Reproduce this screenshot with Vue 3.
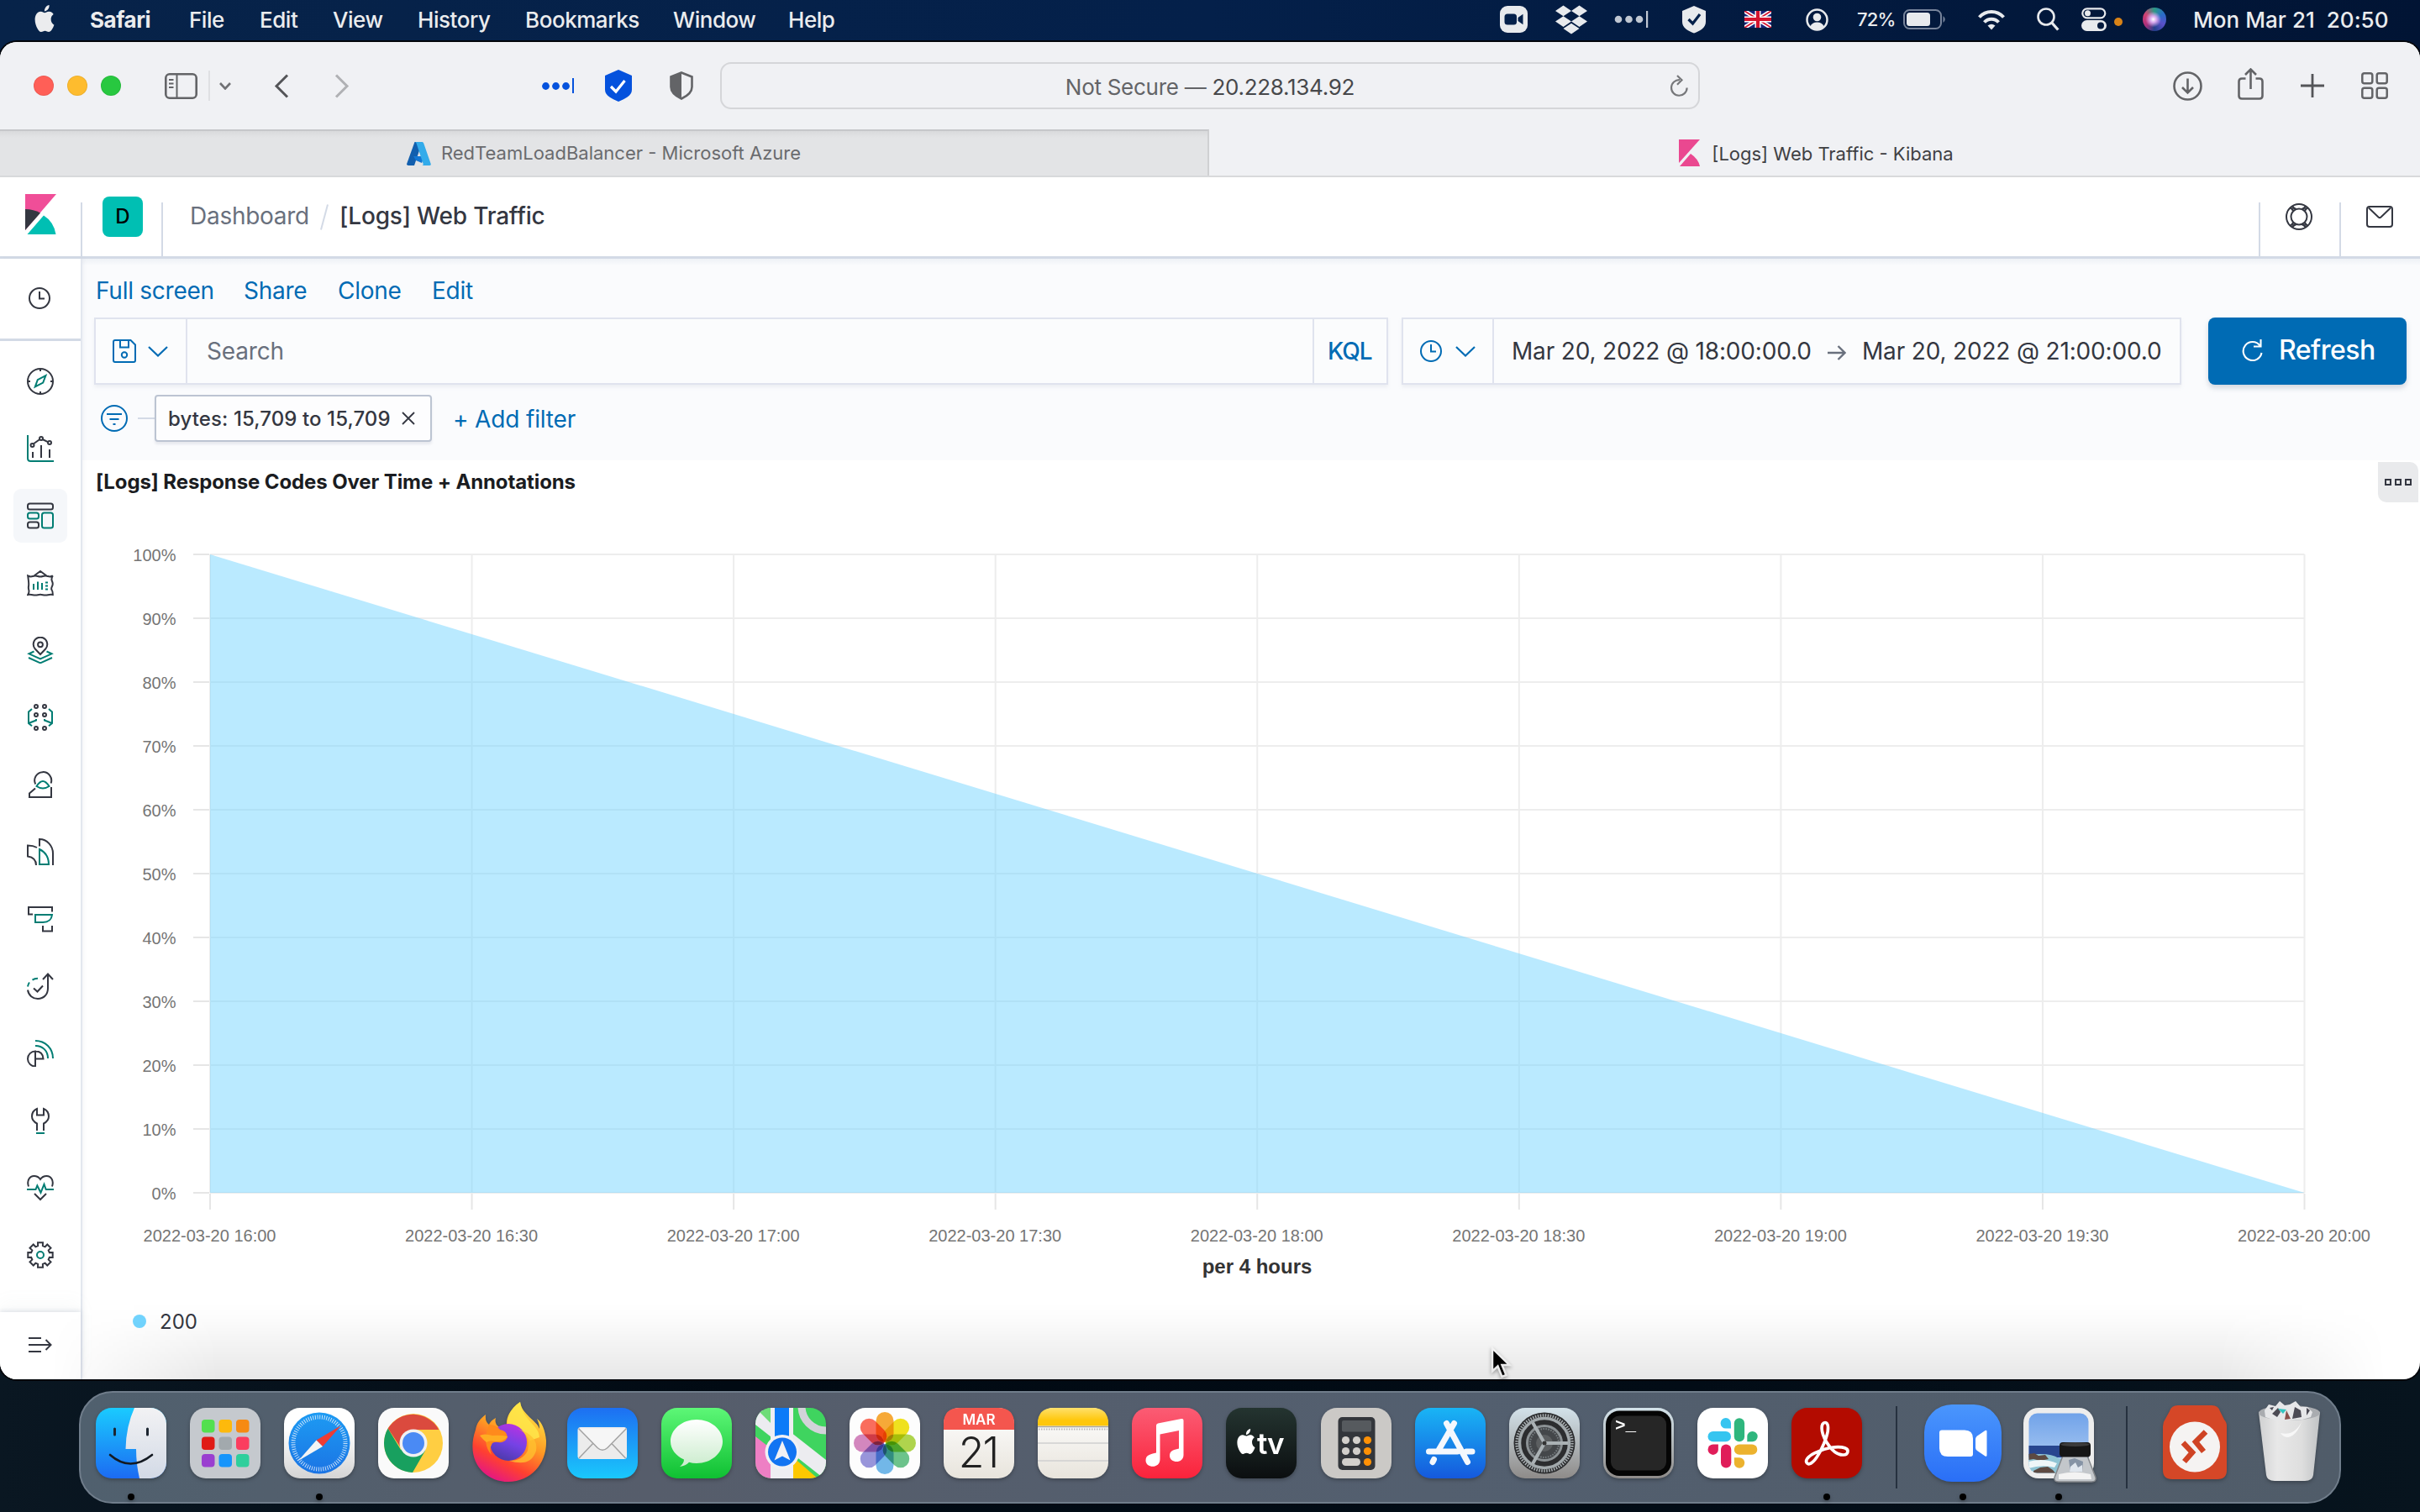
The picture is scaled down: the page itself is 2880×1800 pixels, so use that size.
<script setup>
const INK = '#343741'
const TEAL = '#017d73'

const menus = [
  { label: 'Safari', w: 118, bold: true },
  { label: 'File', w: 84 },
  { label: 'Edit', w: 87 },
  { label: 'View', w: 101 },
  { label: 'History', w: 128 },
  { label: 'Bookmarks', w: 176 },
  { label: 'Window', w: 137 },
  { label: 'Help', w: 80 },
]

// Toothed outline for the settings icon
const gearPath = (() => {
  const pts = []
  for (let i = 0; i < 8; i++) {
    const a = (i * Math.PI) / 4
    for (const [da, r] of [[-0.26, 11.2], [-0.2, 15], [0.2, 15], [0.26, 11.2]]) {
      pts.push(`${(16 + r * Math.sin(a + da)).toFixed(2)} ${(16 - r * Math.cos(a + da)).toFixed(2)}`)
    }
  }
  return 'M' + pts.join('L') + 'z'
})()

const k = (d) => `<path d="${d}" stroke="${INK}"/>`
const t = (d) => `<path d="${d}" stroke="${TEAL}"/>`
const kc = (x, y, r) => `<circle cx="${x}" cy="${y}" r="${r}" stroke="${INK}"/>`

const nav = [
  { id: 'discover', svg: kc(16, 16, 15) + k('M16 1v3M16 28v3M1 16h3M28 16h3') + t('M9.8 22.4l3-8.2 9.6-5-3.200 8.400z') },
  { id: 'visualize', svg: t('M1 0v27.500q0 3.500 3.500 3.500H32') + k('M7 20v7M17 12v7.500V27M27 17v10M8 10.300l7-5.100M18.600 5l6.300 3.200') + kc(6.500, 12, 2) + kc(17, 4, 2) + kc(27, 9, 2) },
  { id: 'dashboard', active: true, svg: `<rect x="1" y="1.500" width="30" height="7" rx="2.500" stroke="${INK}"/><rect x="1" y="12.500" width="13" height="7" rx="2.500" stroke="${TEAL}"/><rect x="1" y="23.500" width="13" height="7" rx="2.500" stroke="${INK}"/><rect x="18" y="12.500" width="13" height="18" rx="2.500" stroke="${TEAL}"/>` },
  { id: 'canvas', svg: k('M8.500 7.500L16 2l7.500 5.500M1.200 7.500Q4 9 7 8t6 0 6 0 6 0 5.800-.5Q28.500 11 30 14t0 6-.3 4.500 1.100 5.500Q28 29.500 25 30.200t-6 0-6 0-6 0-5.800-.2Q3 27 2.300 24.500T2 20t0-6-.8-6.500z') + t('M8 17v7M13 14.500V24M18 16v8M22 15.500h3M22 19.500h3M22 23.500h3') },
  { id: 'maps', svg: k('M16 21L9.800 14.500a8.300 8.300 0 1 1 12.400 0z') + kc(16, 9.300, 2.900) + t('M8.500 17.500L2.500 20.300 16 26.500l13.500-6.200-6-2.800M2 25l14 6.300L30 25') },
  { id: 'ml', svg: [[11, 3], [21, 3], [11, 13], [21, 13], [11, 29], [21, 29]].map(([x, y]) => kc(x, y, 2)).join('') + t('M6 6L2 9.500V23l4 3.300M2 23l9-3.500V18M26 6l4 3.500V23l-4 3.300M30 23l-9-3.500V18') },
  { id: 'user', svg: k('M10.200 15.500A10 10 0 1 1 28.600 14.500M10 20.500L3 26.500V31h26V19') + t('M11.500 18q4-6 7.500-6t7.500 6q-7.500 5-15 0z') },
  { id: 'metrics', svg: k('M15 9.500V1c9 0 16 8 16 17v14M12 11Q7.500 8.500 1 8.500V21.500Q11 23 11 32') + t('M15 13q11 5.500 11 18H15z') },
  { id: 'apm', svg: k('M7 10.500H2V2h28v5.500M19 24v6.500h11V24') + t('M10 11h20q-1 9-11 9h-9z') },
  { id: 'uptime', svg: k('M19 8l6-6.500L31 8M25 2v16.500C25 26 20 31 13 31 7 31 2 27 1 20.500M8 18.500l4.500 4 6.500-7') + t('M1 16.500q.5-3 2-5M6.500 8.600Q9 7 13 6.800') },
  { id: 'siem', svg: t('M10 1c12 0 21 9 21 21M10 7c9 0 15 6 15 15') + k('M10 13.500a9 9 0 0 0 0 18zM10 13.500q9 0 9.500 9H10') },
  { id: 'devtools', svg: k('M12 28v-8.500C8 17.500 6 15 6 11c0-4 2.500-7.500 6-9v7.500h8V2c3.500 1.500 6 5 6 9 0 4-2 6.500-6 8.500V28') + t('M11 31h10') },
  { id: 'monitoring', svg: k('M2 14.500C-.5 7 3.500 2 8.500 2 12 2 14.500 3.700 16 6c1.500-2.300 4-4 7.500-4 5 0 9 5 6.500 12.500M9 23l7 7 7-7') + t('M0 18h10.500l1.800-4.500 4.200 8.300 4-10 2.200 6.200H32') },
  { id: 'management', svg: k(gearPath) + `<circle cx="16" cy="16" r="4" stroke="${TEAL}"/>` },
]

const chart = { left: 250, right: 2742.5, top: 660, bottom: 1420 }
const yTicks = Array.from({ length: 11 }, (_, i) => ({
  label: `${100 - i * 10}%`,
  y: chart.top + ((chart.bottom - chart.top) * i) / 10,
}))
const xTicks = ['16:00', '16:30', '17:00', '17:30', '18:00', '18:30', '19:00', '19:30', '20:00'].map((v, i) => ({
  label: `2022-03-20 ${v}`,
  x: chart.left + ((chart.right - chart.left) * i) / 8,
}))

const launchpad = ['#53e04f', '#fdb90c', '#f68a12', '#e01b16', '#a2a9ad', '#fb3d5f', '#9a3fd0', '#1795fb', '#2fcf9c']
const petals = ['#f8a01c', '#f0e000', '#a6d134', '#59bd7c', '#5fb0e8', '#8b87d8', '#cf78b8', '#fb5a48']
const APPLE = 'M12.152 6.896c-.948 0-2.415-1.078-3.960-1.040-2.040.027-3.910 1.183-4.961 3.014-2.117 3.675-.546 9.103 1.519 12.090 1.013 1.454 2.208 3.090 3.792 3.039 1.520-.065 2.090-.987 3.935-.987 1.831 0 2.350.987 3.960.948 1.637-.026 2.676-1.480 3.676-2.948 1.156-1.688 1.636-3.325 1.662-3.415-.039-.013-3.182-1.221-3.220-4.857-.026-3.040 2.480-4.494 2.597-4.559-1.429-2.090-3.623-2.324-4.390-2.376-2-.156-3.675 1.090-4.610 1.090zM15.530 3.830c.843-1.012 1.400-2.427 1.245-3.830-1.207.052-2.662.805-3.532 1.818-.780.896-1.454 2.338-1.273 3.714 1.338.104 2.715-.688 3.559-1.701'
</script>

<template>
  <div class="desktop">
    <!-- macOS menu bar -->
    <header class="menubar">
      <svg class="apple" width="28" height="32" viewBox="0 0 24 24" preserveAspectRatio="none"><path :d="APPLE" fill="#ebecee" /></svg>
      <span v-for="m in menus" :key="m.label" class="menu" :class="{ bold: m.bold }" :style="{ width: m.w + 'px' }">{{ m.label }}</span>
      <div class="status">
        <svg class="s1" width="33" height="32" viewBox="0 0 33 32"><rect width="33" height="32" rx="9" fill="#e8eaed" /><rect x="5.500" y="9.500" width="14.500" height="13" rx="3.500" fill="#04204a" /><path d="M21.500 14l6-4.300v12.600l-6-4.300z" fill="#04204a" /></svg>
        <svg class="s2" width="38" height="35" viewBox="0 1.500 24 21" preserveAspectRatio="none"><path fill="#e8eaed" d="M6 1.807L0 5.629l6 3.822 6.001-3.822L6 1.807zM18 1.807l-6 3.822 6 3.822 6-3.822-6-3.822zM0 13.274l6 3.822 6.001-3.822L6 9.452l-6 3.822zM18 9.452l-6 3.822 6 3.822 6-3.822-6-3.822zM6 18.371l6.001 3.822 6-3.822-6-3.822L6 18.371z" /></svg>
        <svg class="s3" width="42" height="20" viewBox="0 0 42 20"><g fill="#c0c7d2"><circle cx="5" cy="10" r="4.300" /><circle cx="17.500" cy="10" r="4.300" /><circle cx="30" cy="10" r="4.300" /><rect x="38" y="0" width="2.200" height="20" /></g></svg>
        <svg class="s4" width="30" height="34" viewBox="0 0 30 34"><path d="M15 1l14 6v13c0 7-7 11-14 13.500C8 31 1 27 1 20V7z" fill="#e8eaed" /><path d="M8.500 17l5 5 8.500-11" fill="none" stroke="#03204a" stroke-width="3.200" /></svg>
        <svg class="s5" width="32" height="20" viewBox="0 0 32 20"><rect width="32" height="20" fill="#17257a" /><path d="M0 0l32 20M32 0L0 20" stroke="#fff" stroke-width="5" /><path d="M0 0l32 20M32 0L0 20" stroke="#d4142f" stroke-width="1.800" /><path d="M16 0v20M0 10h32" stroke="#fff" stroke-width="7" /><path d="M16 0v20M0 10h32" stroke="#d4142f" stroke-width="4.200" /></svg>
        <svg class="s6" width="27" height="27" viewBox="0 0 27 27"><circle cx="13.500" cy="13.500" r="12" fill="none" stroke="#e8eaed" stroke-width="2.500" /><circle cx="13.500" cy="10.500" r="4.800" fill="#e8eaed" /><path d="M5.500 21.500q2-5 8-5t8 5q-3.500 3.500-8 3.500t-8-3.500z" fill="#e8eaed" /></svg>
        <span class="pct">72%</span>
        <svg class="s7" width="52" height="24" viewBox="0 0 52 24"><rect x="1" y="1" width="44" height="22" rx="6.500" fill="none" stroke="#77849b" stroke-width="2" /><rect x="4" y="4" width="28" height="16" rx="3.500" fill="#e8eaed" /><path d="M47.500 8q4.500 4 0 8z" fill="#77849b" /></svg>
        <svg class="s8" width="34" height="25" viewBox="0 0 34 25" fill="none" stroke="#e8eaed" stroke-width="4"><path d="M2.500 9.500q6-6.500 14.500-6.500t14.500 6.500" /><path d="M8.500 15.500q3.500-3.800 8.500-3.800t8.500 3.800" /><path d="M17 24.500l-4.500-5q4.500-3.500 9 0z" fill="#e8eaed" stroke="none" /></svg>
        <svg class="s9" width="27" height="28" viewBox="0 0 27 28" fill="none" stroke="#e8eaed" stroke-width="2.600"><circle cx="11" cy="11" r="9.500" /><path d="M17.800 18l7.500 8.500" stroke-width="3.300" /></svg>
        <svg class="s10" width="30" height="28" viewBox="0 0 30 28"><rect x="1.300" y="1.300" width="27" height="11" rx="5.500" fill="none" stroke="#e8eaed" stroke-width="2.200" /><circle cx="7.500" cy="6.800" r="3.500" fill="#e8eaed" /><rect y="15" width="30" height="13" rx="6.500" fill="#e8eaed" /><circle cx="23" cy="21.500" r="4" fill="#03193c" /></svg>
        <i class="mic"></i>
        <i class="siri"></i>
        <span class="clock">Mon Mar 21&nbsp; 20:50</span>
      </div>
    </header>

    <!-- Browser window -->
    <section class="window">
      <div class="toolbar">
        <div class="lights"><i class="red"></i><i class="yellow"></i><i class="green"></i></div>
        <svg class="t1" width="39" height="31" viewBox="0 0 39 31" fill="none" stroke="#636467" stroke-width="2.600"><rect x="1.300" y="1.300" width="36.400" height="28.400" rx="4.500" /><path d="M14.500 1v29M5 8h5.500M5 12.500h5.500M5 17h5.500" stroke-width="2" /></svg>
        <i class="tdiv"></i>
        <svg class="t2" width="14" height="9" viewBox="0 0 14 9" fill="none" stroke="#707174" stroke-width="2.600"><path d="M1 1l6 6.500L13 1" /></svg>
        <svg class="t3" width="18" height="29" viewBox="0 0 18 29" fill="none" stroke="#545558" stroke-width="3"><path d="M16 1.500L3 14.500l13 13" /></svg>
        <svg class="t4" width="18" height="29" viewBox="0 0 18 29" fill="none" stroke="#b0b1b4" stroke-width="3"><path d="M2 1.500l13 13-13 13" /></svg>
        <svg class="t5" width="38" height="18" viewBox="0 0 38 18" fill="#0552dd"><circle cx="4.500" cy="9.500" r="4.400" /><circle cx="16.500" cy="9.500" r="4.400" /><circle cx="28.500" cy="9.500" r="4.400" /><path d="M36 0h2v18h-2z" /></svg>
        <svg class="t6" width="32" height="38" viewBox="0 0 32 38"><path d="M16 0l16 7v17c0 7-9 11-16 14C9 35 0 31 0 24V7z" fill="#0552dd" /><path d="M7 20l6 6 10.500-13" fill="none" stroke="#fff" stroke-width="3.200" /></svg>
        <svg class="t7" width="28" height="34" viewBox="0 0 28 34"><path d="M14 1.500l12.500 5v12c0 6-6 11-12.500 14C7.500 29.500 1.500 24.500 1.500 18.500v-12z" fill="#f0f1f4" stroke="#636467" stroke-width="2.600" /><path d="M14 1L1.500 6.500v12c0 6 6 11 12.500 14z" fill="#636467" /></svg>
        <div class="url">
          <span><em>Not Secure — </em>20.228.134.92</span>
          <svg width="22" height="26" viewBox="0 0 22 26" fill="none" stroke="#77787b" stroke-width="2.200"><path d="M12 6.200a9.300 9.300 0 1 0 8.600 9.300M9 1l5.500 5.300L9 11.800" /></svg>
        </div>
        <div class="tools">
          <svg class="dl" width="35" height="35" viewBox="0 0 35 35" fill="none" stroke="#636467" stroke-width="2.600"><circle cx="17.500" cy="17.500" r="16" /><path d="M17.500 8.500v16.500M11 19l6.500 6.500L24 19" /></svg>
          <svg class="share" width="31" height="38" viewBox="0 0 31 38" fill="none" stroke="#636467" stroke-width="2.600"><path d="M9.500 12.500H5q-3.500 0-3.500 3.500v17q0 3.500 3.500 3.500h21q3.500 0 3.500-3.500V16q0-3.500-3.500-3.500h-4.500M15.500 25V2M9 8l6.500-6.500L22 8" /></svg>
          <svg width="28" height="28" viewBox="0 0 28 28" stroke="#545558" stroke-width="2.800"><path d="M14 0v28M0 14h28" /></svg>
          <svg width="32" height="32" viewBox="0 0 32 32" fill="none" stroke="#636467" stroke-width="2.500"><rect x="1.300" y="1.300" width="12" height="12" rx="2.500" /><rect x="18.700" y="1.300" width="12" height="12" rx="2.500" /><rect x="1.300" y="18.700" width="12" height="12" rx="2.500" /><rect x="18.700" y="18.700" width="12" height="12" rx="2.500" /></svg>
        </div>
      </div>

      <div class="tabs">
        <div class="tab inactive">
          <svg width="29" height="28" viewBox="0 0 29 28"><path d="M9.500 0h9L9 28H2q-2.500 0-1.700-2.500z" fill="#125fae" /><path d="M8 17h13l-3 8-7-3z" fill="#1377d4" /><path d="M10 0h8.500q1.200 0 1.700 1.500L28.700 26q.5 2-1.700 2h-9q2.200 0 1.500-2.200L11.500 1.500Q11 0 10 0z" fill="#33abea" /></svg>
          <span>RedTeamLoadBalancer - Microsoft Azure</span>
        </div>
        <div class="tab current">
          <svg width="25" height="32" viewBox="0 0 25 32" fill="#ea4890"><path d="M0 0h25L0 28z" /><path d="M14 17q9 6 11 15H1z" /></svg>
          <span>[Logs] Web Traffic - Kibana</span>
        </div>
      </div>

      <!-- Kibana header -->
      <div class="khead">
        <div class="logo"><svg width="37" height="48" viewBox="0 0 37 48"><path d="M0 0h37L0 43z" fill="#f04e98" /><path d="M0 18q10 0 18 4.500L0 43z" fill="#343741" /><path d="M22 25.500Q34 33 36.500 48H2.500z" fill="#00bfb3" /></svg></div>
        <div class="cell space"><b>D</b></div>
        <nav class="cell crumbs"><span class="dim">Dashboard</span><i></i><span class="cur">[Logs] Web Traffic</span></nav>
        <div class="cell act"><svg width="32" height="32" viewBox="0 0 32 32" fill="none" stroke="#343741" stroke-width="2"><circle cx="16" cy="16" r="15" /><circle cx="16" cy="16" r="9.500" /><path d="M5.500 5.500q3 1 3.700 4M8 3.500q2 3 4.500 3.500M26.500 5.500q-3 1-3.700 4M24 3.500q-2 3-4.500 3.500M5.500 26.500q3-1 3.700-4M8 28.500q2-3 4.500-3.500M26.500 26.500q-3-1-3.700-4M24 28.500q-2-3-4.500-3.500" stroke-width="2.300" /></svg></div>
        <div class="cell act"><svg width="32" height="26" viewBox="0 0 32 26" fill="none" stroke="#343741" stroke-width="2"><rect x="1" y="1" width="30" height="24" rx="3" /><path d="M3 2.500l11.500 11q1.500 1.200 3 0L29 2.500" /></svg></div>
      </div>

      <div class="kbody">
        <aside class="side">
          <div class="recent"><svg width="26" height="26" viewBox="0 0 26 26" fill="none" stroke="#343741" stroke-width="2"><circle cx="13" cy="13" r="12" /><path d="M13 5v8.500h6" /></svg></div>
          <div class="navlist">
            <div v-for="n in nav" :key="n.id" class="navitem">
              <div class="navbox" :class="{ active: n.active }"><svg width="32" height="32" viewBox="0 0 32 32" fill="none" stroke-width="2" v-html="n.svg"></svg></div>
            </div>
          </div>
          <div class="expand"><svg width="28" height="18" viewBox="0 0 28 18" fill="none" stroke="#343741" stroke-width="2"><path d="M0 1h15M0 9h26M0 17h15M20.500 3l6 6-6 6" /></svg></div>
        </aside>

        <main class="main">
          <div class="controls">
            <div class="links"><a class="l1">Full screen</a><a class="l2">Share</a><a class="l3">Clone</a><a>Edit</a></div>
            <div class="qrow">
              <div class="box search">
                <div class="saved">
                  <svg width="28" height="28" viewBox="0 0 28 28" fill="none" stroke="#006bb4" stroke-width="2"><path d="M3 1h18.500L27 6.500V25q0 2-2 2H3q-2 0-2-2V3q0-2 2-2zM9 1v8.500h10V1" /><circle cx="14" cy="18.500" r="3.200" /></svg>
                  <svg width="24" height="13" viewBox="0 0 24 13" fill="none" stroke="#006bb4" stroke-width="2.200"><path d="M1 1l11 10.500L23 1" /></svg>
                </div>
                <div class="input">Search</div>
                <div class="kql">KQL</div>
              </div>
              <div class="box date">
                <div class="quick">
                  <svg width="26" height="26" viewBox="0 0 26 26" fill="none" stroke="#006bb4" stroke-width="2"><circle cx="13" cy="13" r="12" /><path d="M13 5v8.500h6" /></svg>
                  <svg width="24" height="13" viewBox="0 0 24 13" fill="none" stroke="#006bb4" stroke-width="2.200"><path d="M1 1l11 10.500L23 1" /></svg>
                </div>
                <span class="when">Mar 20, 2022 @ 18:00:00.0</span>
                <svg class="arr" width="22" height="18" viewBox="0 0 22 18" fill="none" stroke="#69707d" stroke-width="2.400"><path d="M0 9h20M12.500 1l8 8-8 8" /></svg>
                <span class="when">Mar 20, 2022 @ 21:00:00.0</span>
              </div>
              <button class="refresh"><svg width="26" height="27" viewBox="0 0 26 27" fill="none" stroke="#fff" stroke-width="2.100"><path d="M22.500 8.500A11 11 0 1 0 24.500 17M23.500 1v8.500H15" /></svg>Refresh</button>
            </div>
            <div class="filters">
              <svg width="32" height="32" viewBox="0 0 32 32" fill="none" stroke="#006bb4" stroke-width="2"><circle cx="16" cy="16" r="15" /><path d="M7 11h18M10.500 17h11M14.500 23h3" /></svg>
              <i class="dash"></i>
              <div class="pill"><span>bytes: 15,709 to 15,709</span><svg width="16" height="16" viewBox="0 0 16 16" stroke="#343741" stroke-width="1.800"><path d="M1 1l14 14M15 1L1 15" /></svg></div>
              <a class="add">+ Add filter</a>
            </div>
          </div>

          <div class="panelhead">
            <h2>[Logs] Response Codes Over Time + Annotations</h2>
            <div class="opts"><i></i><i></i><i></i></div>
          </div>
          <svg class="chart" width="2784" height="940" viewBox="96 600 2784 940">
            <g stroke="#ededed" stroke-width="2">
              <path v-for="y in yTicks" :key="y.y" :d="`M${chart.left} ${y.y}H${chart.right}`" />
              <path v-for="x in xTicks" :key="x.x" :d="`M${x.x} ${chart.top}V${chart.bottom}`" />
            </g>
            <path :d="`M${chart.left} ${chart.top}L${chart.right} ${chart.bottom}H${chart.left}z`" fill="#75d5ff" fill-opacity="0.5" />
            <g stroke="#e6e6e6" stroke-width="2">
              <path v-for="y in yTicks" :key="y.y" :d="`M230 ${y.y}H249`" />
              <path v-for="x in xTicks" :key="x.x" :d="`M${x.x} 1421V1440`" />
            </g>
            <g class="ticks">
              <text v-for="y in yTicks" :key="y.y" x="209.500" :y="y.y + 7.500" text-anchor="end">{{ y.label }}</text>
              <text v-for="x in xTicks" :key="x.x" :x="x.x - 0.5" y="1478" text-anchor="middle">{{ x.label }}</text>
            </g>
            <text class="axis" x="1496" y="1516" text-anchor="middle">per 4 hours</text>
          </svg>
          <div class="legend"><i></i><span>200</span></div>
        </main>
      </div>
      <div class="shade"></div>
    </section>

    <!-- Dock -->
    <footer class="dock">
      <svg class="ico" viewBox="0 0 84 84">
        <defs>
          <linearGradient id="gFinder" x2="0" y2="1"><stop stop-color="#1acbff" /><stop offset="1" stop-color="#1c6bf2" /></linearGradient>
          <linearGradient id="gGrey" x2="0" y2="1"><stop stop-color="#f2f2f4" /><stop offset="1" stop-color="#d3dae6" /></linearGradient>
          <linearGradient id="gWhite" x2="0" y2="1"><stop offset=".3" stop-color="#fff" /><stop offset="1" stop-color="#d4d4d4" /></linearGradient>
          <linearGradient id="gPaper" x2="0" y2="1"><stop stop-color="#fff" /><stop offset="1" stop-color="#e8e4dc" /></linearGradient>
          <linearGradient id="gBlue" x2="0" y2="1"><stop stop-color="#1d9bf3" /><stop offset="1" stop-color="#1b74e4" /></linearGradient>
          <linearGradient id="gMail" x2="0" y2="1"><stop stop-color="#1d6ff2" /><stop offset="1" stop-color="#1ac8fc" /></linearGradient>
          <linearGradient id="gGreen" x2="0" y2="1"><stop stop-color="#5df777" /><stop offset="1" stop-color="#0fc032" /></linearGradient>
          <linearGradient id="gMusic" x2="0" y2="1"><stop stop-color="#fb5c74" /><stop offset="1" stop-color="#fa233b" /></linearGradient>
          <linearGradient id="gTv" x2="0" y2="1"><stop stop-color="#243430" /><stop offset="1" stop-color="#0b0e10" /></linearGradient>
          <linearGradient id="gStore" x2="0" y2="1"><stop stop-color="#19b5f5" /><stop offset="1" stop-color="#1559dd" /></linearGradient>
          <linearGradient id="gSet" x2="0" y2="1"><stop stop-color="#d3e2ea" /><stop offset="1" stop-color="#8e8b89" /></linearGradient>
          <linearGradient id="gYel" x2="0" y2="1"><stop stop-color="#ffe06b" /><stop offset=".7" stop-color="#ffc70a" /></linearGradient>
          <linearGradient id="gZoom" x2="0" y2="1"><stop stop-color="#4a96fd" /><stop offset="1" stop-color="#2a6ff6" /></linearGradient>
          <linearGradient id="gFox" x1=".8" x2=".3" y2="1"><stop stop-color="#ffee4a" /><stop offset=".45" stop-color="#ff9a23" /><stop offset=".75" stop-color="#ff4030" /><stop offset="1" stop-color="#e31587" /></linearGradient>
          <linearGradient id="gOrb" x1=".7" x2=".3" y2="1"><stop stop-color="#b833e1" /><stop offset=".5" stop-color="#7542e5" /><stop offset="1" stop-color="#4a3aa8" /></linearGradient>
          <linearGradient id="gSky" x2="0" y2="1"><stop stop-color="#6a9ee8" /><stop offset="1" stop-color="#bcd6f5" /></linearGradient>
          <linearGradient id="gTrash" x2="1" y2="0"><stop stop-color="#cfd0d1" /><stop offset=".3" stop-color="#e8e8e8" /><stop offset=".7" stop-color="#dedede" /><stop offset="1" stop-color="#c0c3c5" /></linearGradient>
          <linearGradient id="gBubble" x2="0" y2="1"><stop stop-color="#fff" /><stop offset="1" stop-color="#cbeccd" /></linearGradient>
          <clipPath id="rc"><rect width="84" height="84" rx="19" /></clipPath>
          <clipPath id="pv"><rect x="6.500" y="6.500" width="71" height="71" rx="10" /></clipPath>
        </defs>
        <g clip-path="url(#rc)"><rect width="84" height="84" fill="url(#gFinder)" /><path d="M46 0Q36 22 35.500 49H48q0 18 4 35h32V0z" fill="url(#gGrey)" /></g>
        <path d="M22.500 25v7M61.500 25v7" stroke="#1c2530" stroke-width="3" stroke-linecap="round" /><path d="M17 56q24 21 50 0" fill="none" stroke="#141a22" stroke-width="2.600" stroke-linecap="round" />
        <circle cx="42" cy="106" r="4" />
      </svg>
      <svg class="ico" viewBox="0 0 84 84"><rect width="84" height="84" rx="19" fill="#c5c9ce" /><rect v-for="(c, i) in launchpad" :key="i" :x="14 + (i % 3) * 20.500" :y="14 + Math.floor(i / 3) * 20.500" width="15.500" height="15.500" rx="4" :fill="c" /></svg>
      <svg class="ico" viewBox="0 0 84 84"><rect width="84" height="84" rx="19" fill="url(#gWhite)" /><circle cx="42" cy="42" r="36.500" fill="url(#gBlue)" /><circle cx="42" cy="42" r="31" fill="none" stroke="#fff" stroke-opacity=".75" stroke-width="5" stroke-dasharray="1 1.706" /><path d="M68 21L38.500 38.500 46 46z" fill="#ee3c34" /><path d="M17 63l21.500-24.500L46 46z" fill="#f4f4f4" /><circle cx="42" cy="106" r="4" /></svg>
      <svg class="ico" viewBox="0 0 84 84"><rect width="84" height="84" rx="19" fill="#fafafa" /><circle cx="42" cy="42" r="35" fill="#ffce42" /><path d="M11.700 24.500A35 35 0 0 0 41 77L56 51 42 42 27 50z" fill="#18a05f" /><path d="M11.700 24.500A35 35 0 0 1 72.300 26H42L26 46z" fill="#db4a3e" /><circle cx="42" cy="42" r="16.500" fill="#f1f1f1" /><circle cx="42" cy="42" r="13" fill="#4a8af4" /></svg>
      <svg class="ico fox" viewBox="0 0 92 96"><path d="M60 0C47 9 43 20 44 28q-6 0-9 2-6-4-4-11-6 3-8 8-5-3-4-12C12 20 8 26 7 33-6 70 18 95 46 95c27 0 46-22 45-49-1-12-5-22-11-26 3 6 3 10 3 12C80 22 62 15 60 0z" fill="url(#gFox)" /><path d="M60 0c-13 9-17 21-15 30 10 0 22 6 27 16l11-4c0-14-20-20-23-42z" fill="#ffe84a" opacity=".85" /><circle cx="46" cy="48" r="22" fill="url(#gOrb)" /><path d="M23 27q9 0 13 6 8 1 9 9-3 7-11 6-7-1-8 3-3 5 0 12-12-13-3-36z" fill="#ff8a1c" /><path d="M12 40q5-3 15 0 9-1 18 1-4 6-14 6-7-2-11 1-4-3-8-8z" fill="#ffad22" /><path d="M57 32q16 6 12 26-6 12-22 12 26 8 32-12 3-18-22-26z" fill="#ffc12f" opacity=".8" /></svg>
      <svg class="ico" viewBox="0 0 84 84"><rect width="84" height="84" rx="19" fill="url(#gMail)" /><rect x="12.500" y="23" width="58.500" height="38" rx="3.500" fill="#ececec" /><g fill="none" stroke="#a3a3a3" stroke-width="1.500"><path d="M14 60l18-19M69.500 60l-18-19" /><path d="M13.500 24.500l22.500 23q6 5.500 12 0l22.500-23" fill="#f6f6f6" /></g></svg>
      <svg class="ico" viewBox="0 0 84 84"><rect width="84" height="84" rx="19" fill="url(#gGreen)" /><path d="M42 14c17 0 31 11.500 31 26S59 66 42 66q-5 0-9-1.200Q29 69 22 70q5-4 5-8.500C17 57 11 49 11 40c0-14.500 14-26 31-26z" fill="url(#gBubble)" /></svg>
      <svg class="ico" viewBox="0 0 84 84"><g clip-path="url(#rc)"><rect width="84" height="84" fill="#3fd45f" /><path d="M0 12L84 78V54L0-12z" fill="#ececf0" transform="translate(0 8)" /><path d="M0 0h18v18z" fill="#6fdc78" /><path d="M0 34l19 15v35H0z" fill="#ee7fc4" /><path d="M44 58l30 26H44z" fill="#fdc800" /><path d="M18 0h27v84H18z" fill="#eeeef2" /><path d="M23 0h17v50H23z" fill="#0b7bf8" /><circle cx="84" cy="-2" r="29" fill="none" stroke="#d2d3d8" stroke-width="9" /></g><circle cx="32" cy="52.500" r="20.500" fill="#f1f1f4" /><circle cx="32" cy="52.500" r="17" fill="#1274f2" /><path d="M32 39l9.500 23.500L32 57.500l-9.500 5z" fill="#f1f1f4" /></svg>
      <svg class="ico" viewBox="0 0 84 84"><rect width="84" height="84" rx="19" fill="#fdfdfd" /><rect v-for="(c, i) in petals" :key="i" class="petal" x="31.500" y="5" width="21" height="36" rx="10.500" :fill="c" :transform="`rotate(${i * 45} 42 42)`" /></svg>
      <svg class="ico" viewBox="0 0 84 84"><rect width="84" height="84" rx="19" fill="url(#gPaper)" /><path d="M0 26V19Q0 0 19 0h46q19 0 19 19v7z" fill="#f4564e" /><text x="42" y="20" class="mar" text-anchor="middle">MAR</text><text x="41" y="70.500" class="day" text-anchor="middle">21</text></svg>
      <svg class="ico" viewBox="0 0 84 84"><rect width="84" height="84" rx="19" fill="url(#gPaper)" /><path d="M0 21.500V19Q0 0 19 0h46q19 0 19 19v2.500z" fill="url(#gYel)" /><path d="M0 22.500h84" stroke="#a9a69f" stroke-width="1.500" /><path d="M1 25.500h82" stroke="#b7b7b7" stroke-width="2" stroke-dasharray="1.500 1.500" /><path d="M0 42h84M0 63h84" stroke="#cfcfcf" stroke-width="1.500" /></svg>
      <svg class="ico" viewBox="0 0 84 84"><rect width="84" height="84" rx="19" fill="url(#gMusic)" /><path d="M29 21q0-2 2-2.500L59 13q2.500-.5 2.500 2v41c0 11-16.500 10-16.500 1 0-7 6-7 11-8.500V27L33.500 31.500V61c0 12-17 11-17 1.500 0-7 7-7.500 12.500-9z" fill="#fff" /></svg>
      <svg class="ico" viewBox="0 0 84 84"><rect width="84" height="84" rx="19" fill="url(#gTv)" /><g transform="translate(11 25) scale(1.080 1.250)"><path :d="APPLE" fill="#fff" /></g><text x="37" y="54.500" class="tv">tv</text></svg>
      <svg class="ico" viewBox="0 0 84 84"><rect width="84" height="84" rx="19" fill="#cbc9c6" /><rect x="20.500" y="11" width="44" height="63" rx="5" fill="#33363b" /><rect x="25" y="15" width="35" height="13.500" rx="2" fill="#565a5e" /><g fill="#d2cfcb"><circle cx="29.500" cy="38.500" r="4.600" /><circle cx="42.500" cy="38.500" r="4.600" /><circle cx="29.500" cy="51.500" r="4.600" /><circle cx="42.500" cy="51.500" r="4.600" /><rect x="25" y="60" width="22" height="9" rx="4.500" /></g><g fill="#ff9105"><circle cx="55.500" cy="38.500" r="4.600" /><circle cx="55.500" cy="51.500" r="4.600" /><circle cx="55.500" cy="64.500" r="4.600" /></g></svg>
      <svg class="ico" viewBox="0 0 84 84"><rect width="84" height="84" rx="19" fill="url(#gStore)" /><g stroke="#f4f8fd" stroke-width="7" stroke-linecap="round"><path d="M46.500 18.500L28 50.500M37.500 18.500L62.500 64.500M22.500 61.500l-1.500 3M16.500 52h34M61 52h7" /></g></svg>
      <svg class="ico" viewBox="0 0 84 84"><rect width="84" height="84" rx="19" fill="url(#gSet)" /><circle cx="42" cy="42" r="36.500" fill="#2c2d2f" /><circle cx="42" cy="42" r="33" fill="none" stroke="#aab0b3" stroke-width="3.500" stroke-dasharray="1.500 1.500" /><circle cx="42" cy="42" r="29.500" fill="none" stroke="#a2a9ac" stroke-width="3.500" /><circle cx="42" cy="42" r="20.500" fill="#44474a" stroke="#8b9194" stroke-width="3" /><circle cx="42" cy="42" r="17" fill="none" stroke="#777d80" stroke-width="2" stroke-dasharray="1.500 1.500" /><circle cx="42" cy="42" r="10" fill="#5c5f61" /><path d="M42 42h28M42 42L28 17.500M42 42L28 66.500" stroke="#aab1b4" stroke-width="4" /><circle cx="42" cy="42" r="2.500" fill="#333" /></svg>
      <svg class="ico" viewBox="0 0 84 84"><rect width="84" height="84" rx="19" fill="url(#gSet)" /><rect x="3" y="3.500" width="78" height="77.500" rx="16" fill="#050505" /><rect x="9" y="9.500" width="66" height="65" rx="10" fill="#262626" /><text x="14" y="27" class="term">&gt;_</text></svg>
      <svg class="ico" viewBox="0 0 84 84"><rect width="84" height="84" rx="19" fill="#fff" /><g fill="#36c5f0"><path d="M40 24.500v-6a6.200 6.200 0 1 0-6.200 6z" /><rect x="12.500" y="28" width="27.500" height="12.300" rx="6.150" /></g><g fill="#2eb67d"><rect x="43.800" y="12.300" width="12.300" height="28" rx="6.150" /><path d="M59.300 40.300v-6.200a6.200 6.200 0 1 1 6.200 6.200z" /></g><g fill="#ecb22e"><rect x="43.800" y="43.500" width="27.500" height="12.300" rx="6.150" /><path d="M43.800 59.300v6.200a6.200 6.200 0 1 0 6.200-6.200z" /></g><g fill="#e01e5a"><path d="M24.900 43.500v6.200a6.200 6.200 0 1 1-6.200-6.200z" /><rect x="28" y="43.500" width="12.300" height="28" rx="6.150" /></g></svg>
      <svg class="ico" viewBox="0 0 84 84"><rect width="84" height="84" rx="19" fill="#b30b00" /><path d="M40 17.500c-5 0-6 10 1.500 23 5.500 9 13 16 20.500 15.500 5 0 7.500-6 1.500-8.200-8-2.800-23-.5-36 6-9 4.500-12 10-8.500 12.500 4 2.500 9.500-4 15.500-15 5-10 9.500-22 9-28.500q-.5-5.300-3.500-5.300z" fill="none" stroke="#fff" stroke-width="3.600" /><circle cx="42" cy="106" r="4" /></svg>
      <i class="sep sepa"></i>
      <svg class="ico zoom" viewBox="0 0 92 92"><rect width="92" height="92" rx="33" fill="url(#gZoom)" /><path d="M18 33.500q0-3 3-3h27q10 0 10 10V59q0 3-3 3H28q-10 0-10-10z" fill="#fff" /><path d="M61 41q0-2 2-3.500l9.500-6.500q2-1 2 1v28.500q0 2-2 1L63 55q-2-1.500-2-3.500z" fill="#fff" /><circle cx="46" cy="110" r="4" /></svg>
      <svg class="ico prev" viewBox="0 0 84 84"><rect width="84" height="84" rx="18" fill="#ededed" /><g clip-path="url(#pv)"><rect width="84" height="84" fill="url(#gSky)" /><path d="M0 45h84v14H0z" fill="#28468f" /><path d="M0 57q30-5 42 3t42-3v30H0z" fill="#8fc4d4" /><path d="M6 55l7-1 5 3 8-1 4 5-10 2-8-2-6 1zM12 75l8-4 9-1 6 4 5 6H12z" fill="#5d4a42" /><path d="M6 64q18-5 34 2l-3 5q-14-4-31 1z" fill="#eef6f8" /></g><path d="M47 57h29l10 26q1 5-5 5H42q-6 0-5-5z" fill="#c3c7cb" stroke="#85888c" stroke-width="1.500" /><path d="M54 62l7-2 10 4-1 11-14 1z" fill="#8593a5" /><path d="M56 70l6-5 3 6 5-3v8H55z" fill="#dfe6ee" /><path d="M42 79q19-5 38 0l1 6H42z" fill="#f3f3f3" /><rect x="43" y="41" width="37" height="17.500" rx="4" fill="#161616" /><ellipse cx="61.500" cy="43.500" rx="17" ry="2.500" fill="#3b3b3b" /><circle cx="42" cy="106" r="4" /></svg>
      <i class="sep sepb"></i>
      <svg class="ico rdp" viewBox="0 0 76 88"><path d="M18 0h40q8 0 10 7l5 10q3 3 3 8v52q0 11-11 11H11Q0 88 0 77V25q0-5 3-9l5-9q2-7 10-7z" fill="#d54727" /><circle cx="38" cy="49.500" r="30" fill="#f5f3f2" /><path d="M24 44.500l11 11.500-9.500 11M51 31.500L39 43.500l9.500 11.500" fill="none" stroke="#cf4324" stroke-width="6.500" /></svg>
      <svg class="ico trash" viewBox="0 0 76 96"><path d="M1 13q36-12 73 0l-8 75q-1 7-10 7H20q-9 0-10-7z" fill="url(#gTrash)" /><ellipse cx="37.500" cy="14" rx="36.500" ry="9" fill="#a9acb0" /><path d="M8 11l5-7 8 2 5-6 6 5 6-1 7-4 6 7 8 0 6 6-2 6-10 3-16 1-16 0-12-4z" fill="#e6e7e9" /><path d="M17 15l7-7 3 5-4 6zM44 7l7 4 1 8-11 2zM14 8l5-1-2 4zM58 8l4 3-4 6z" fill="#4c4b55" /><path d="M24 9l10 1-4 5z" fill="#33c4c0" /><path d="M34 11l5 10-7 1z" fill="#8a4f4a" /><path d="M27 38q16 4 25-13-6 16-16 18-6 0-9-5z" fill="#f7f7f7" /></svg>
    </footer>

    <svg class="cursor" width="26" height="40" viewBox="0 0 26 40"><path d="M2 2v27.500l6.500-6 5 12.500 5-2-5-12h9z" fill="#000" stroke="#fff" stroke-width="2.500" /></svg>
  </div>
</template>

<style>
body { margin: 0; background: #020b14; }
</style>

<style scoped>
* { box-sizing: border-box; }
svg { display: block; flex: none; }
i { flex: none; display: block; }
.desktop {
  position: relative; width: 2880px; height: 1800px; overflow: hidden; display: flex; flex-direction: column; align-items: flex-start;
  font-family: Inter, "Liberation Sans", sans-serif;
  background: linear-gradient(90deg, #072349, #04204a 50%, #011434) top / 100% 80px no-repeat, linear-gradient(90deg, #0a1722, #010a13 30%, #020c16 70%, #07141e);
}
.menubar { width: 2880px; height: 50px; display: flex; align-items: center; padding: 0 0 4px 39px; color: #ebecee; font-size: 26px; flex: none; }
.apple { margin-right: 40px; margin-top: -2px; }
.menu { font-weight: 500; letter-spacing: -0.45px; white-space: nowrap; flex: none; }
.menu.bold { font-weight: 700; }
.status { margin-left: auto; padding-right: 38px; display: flex; align-items: center; white-space: nowrap; }
.s2 { margin-left: 33px; } .s3 { margin-left: 32px; } .s4 { margin-left: 38px; } .s5 { margin-left: 45px; }
.s6 { margin-left: 41px; } .pct { margin-left: 34px; width: 55px; font-size: 22px; font-weight: 500; letter-spacing: -0.8px; }
.s8 { margin-left: 36px; } .s9 { margin-left: 37px; } .s10 { margin-left: 26px; }
.mic { width: 10px; height: 10px; border-radius: 50%; background: #d98317; margin: 5px 0 0 9px; }
.siri { width: 28px; height: 28px; border-radius: 50%; margin-left: 24px; background: radial-gradient(circle at 45% 50%, #fff 0, #d9a9ee 18%, transparent 45%), conic-gradient(#2a9a86, #2a6cc9, #5a50c8, #23408c, #b2307a, #d04372, #2a9a86); }
.clock { width: 232px; margin-left: 32px; font-weight: 500; letter-spacing: 0.05px; }

.window { position: relative; width: 2880px; height: 1592px; flex: none; border-radius: 20px; overflow: hidden; background: #fff; box-shadow: 0 0 0 2px #03060b; }
.toolbar { height: 104px; background: #f0f1f4; display: flex; align-items: center; padding: 0 38px 0 40px; }
.lights { display: flex; gap: 16px; }
.lights i { width: 24px; height: 24px; border-radius: 50%; border: 1px solid #0001; }
.red { background: #ff5f57; } .yellow { background: #febc2e; } .green { background: #28c840; }
.t1 { margin-left: 52px; }
.tdiv { width: 2px; height: 36px; background: #dfe0e3; margin-left: 13px; }
.t2 { margin-left: 11px; } .t3 { margin-left: 51px; } .t4 { margin-left: 54px; } .t5 { margin-left: 229px; }
.t6 { margin-left: 37px; } .t7 { margin-left: 45px; margin-right: 32px; }
.url { width: 1166px; height: 56px; border: 2px solid #d5d6d9; border-radius: 13px; display: flex; align-items: center; justify-content: flex-end; padding-right: 12px; font-size: 26px; color: #47484b; letter-spacing: -0.28px; }
.url span { flex: 1; text-align: center; padding-left: 34px; padding-top: 2px; }
.url em { font-style: normal; color: #636467; }
.tools { margin-left: auto; display: flex; align-items: center; gap: 44px; }
.dl { margin-right: -2px; }
.share { margin-top: -4px; }

.tabs { height: 57px; display: flex; border-bottom: 2px solid #d8d9db; background: #f0f1f4; }
.tab { flex: 1; display: flex; align-items: center; justify-content: center; gap: 12px; font-size: 22px; color: #3f4043; letter-spacing: 0; white-space: nowrap; }
.tab span { position: relative; top: 1px; }
.inactive { background: linear-gradient(#d9dadc, #e3e4e6 8px); color: #6a6b6e; border-right: 2px solid #cfd0d2; border-top: 2px solid #c6c7ca; }
.tab.inactive span { top: -0.5px; }
.current { gap: 14px; padding-left: 4px; }

.khead { height: 97px; display: flex; border-bottom: 3px solid #d3dae6; background: #fff; }
.logo { width: 96px; padding: 20px 0 0 30px; }
.cell { height: 94px; display: flex; align-items: center; padding-bottom: 2px; background: linear-gradient(#d3dae6, #d3dae6) left bottom / 2px 64px no-repeat; }
.space { width: 96px; padding-left: 26px; }
.space b { width: 48px; height: 48px; margin-top: 2px; border-radius: 8px; background: #00bfb3; color: #000; font-size: 24px; font-weight: 500; line-height: 48px; text-align: center; }
.crumbs { flex: 1; padding-left: 34px; font-size: 28px; letter-spacing: -0.27px; white-space: nowrap; }
.dim { color: #69707d; width: 153px; }
.crumbs i { width: 2px; height: 31px; background: #d3dae6; transform: rotate(15deg); margin: 3px 17px 0 6px; }
.cur { color: #343741; font-weight: 500; letter-spacing: -0.2px; }
.act { width: 96px; justify-content: center; padding-bottom: 0; }

.kbody { display: flex; height: 1334px; }
.side { width: 98px; flex: none; border-right: 2px solid #e3e7ef; display: flex; flex-direction: column; background: #fff; box-shadow: 2px 0 4px #98a2b318; z-index: 1; }
.recent { height: 98px; border-bottom: 3px solid #d3dae6; display: flex; align-items: center; justify-content: center; padding: 0 2px 2px 0; }
.navlist { flex: 1; padding-top: 8px; }
.navitem { height: 80px; display: flex; align-items: center; justify-content: center; }
.navbox { width: 64px; height: 64px; border-radius: 9px; display: flex; align-items: center; justify-content: center; }
.active { background: #f5f7fa; }
.expand { height: 80px; display: flex; align-items: center; justify-content: center; padding-bottom: 2px; box-shadow: 0 -2px 5px #98a2b340, 0 -12px 20px #98a2b30c; }
.main { flex: 1; min-width: 0; margin-left: -2px; }
.controls { height: 240px; background: linear-gradient(#eef1f6, #fafbfd 8px); padding-left: 16px; display: flex; flex-direction: column; }
.links { height: 70px; display: flex; align-items: center; padding-top: 5px; padding-left: 2px; font-size: 28px; color: #006bb4; letter-spacing: -0.25px; white-space: nowrap; }
.links a { flex: none; } .l1 { width: 176px; } .l2 { width: 112px; } .l3 { width: 112px; }
.qrow { display: flex; }
.box { height: 80px; border: 2px solid #e0e3ee; background: #fbfcfd; display: flex; align-items: center; font-size: 28px; letter-spacing: -0.17px; white-space: nowrap; box-shadow: 0 3px 4px #98a2b320; }
.search { width: 1540px; margin-right: 16px; }
.saved { width: 109px; height: 76px; border-right: 2px solid #e0e3ee; display: flex; align-items: center; gap: 14px; padding-left: 20px; }
.input { flex: 1; padding-left: 23px; color: #69707d; }
.kql { width: 88px; height: 76px; line-height: 76px; border-left: 2px solid #e0e3ee; color: #006bb4; font-weight: 500; padding-left: 16px; letter-spacing: -1px; }
.date { width: 928px; color: #343741; }
.quick { width: 108px; height: 76px; border-right: 2px solid #e0e3ee; display: flex; align-items: center; gap: 16px; padding-left: 20px; margin-right: 21px; }
.when { width: 357px; padding-bottom: 0; }
.arr { margin: 4px 19px 0; }
.refresh { width: 236px; height: 80px; margin-left: 32px; border: 0; border-radius: 8px; background: #006bb4; color: #fff; font: 500 32px Inter, sans-serif; letter-spacing: -0.5px; display: flex; align-items: center; gap: 19px; padding: 0 0 4px 39px; box-shadow: 0 4px 6px #98a2b366; }
.filters { height: 56px; margin-top: 12px; display: flex; align-items: center; padding-left: 8px; }
.dash { width: 20px; height: 2px; background: #d3dae6; margin-left: 12px; }
.pill { width: 330px; height: 56px; border: 2px solid #bcc4d2; border-radius: 4px; background: #fdfdfe; display: flex; align-items: center; padding-left: 14px; font-size: 24px; font-weight: 500; color: #343741; white-space: nowrap; letter-spacing: 0.1px; box-shadow: 0 3px 3px #98a2b330; }
.pill span { width: 278px; flex: none; }
.add { margin-left: 25px; font-size: 28px; color: #006bb4; letter-spacing: -0.15px; padding-top: 1px; }

.panelhead { height: 52px; display: flex; justify-content: space-between; padding: 2px 2px 0 18px; }
.panelhead h2 { margin: 0; font-size: 24px; line-height: 48px; font-weight: 700; color: #1a1c21; letter-spacing: -0.11px; }
.opts { width: 48px; height: 48px; background: #e9eaec; border-radius: 0 10px 0 10px; display: flex; align-items: center; justify-content: center; gap: 4px; }
.opts i { width: 8px; height: 8px; border: 2px solid #343741; }
.ticks { font: 20px "Liberation Sans", Arial, sans-serif; fill: #757575; }
.axis { font: bold 24px "Liberation Sans", Arial, sans-serif; fill: #333; }
.legend { height: 66px; display: flex; align-items: center; padding-left: 62px; font-size: 24px; color: #343741; }
.legend i { width: 16px; height: 16px; border-radius: 50%; background: #72d5ff; margin-right: 16px; }
.shade { position: absolute; left: 0; right: 0; bottom: 0; height: 92px; z-index: 2; background: linear-gradient(#0000, #00000003 20%, #00000018); mask-image: linear-gradient(90deg, transparent 60px, #000 260px, #000 2640px, transparent 2840px); }

.dock { margin: 14px 0 0 94px; width: 2692px; height: 134px; flex: none; border: 2px solid #707d8b; border-radius: 40px; background: linear-gradient(90deg, #50606e, #565d6b 25%, #535f6f 60%, #505c69); display: flex; align-items: flex-start; padding: 18px 0 0 18px; }
.ico { width: 84px; height: 84px; margin-right: 28.130px; overflow: visible; filter: drop-shadow(0 2px 2px #0004); }
.fox { width: 92px; height: 96px; margin: -7px 24px 0 -4px; }
.sep { width: 2px; height: 98px; margin-top: -2px; background: #26313f; }
.sepa { margin-left: 12px; margin-right: 32px; }
.sepb { margin-left: 10px; margin-right: 42px; }
.zoom { width: 92px; height: 92px; margin-top: -4px; margin-right: 26px; }
.rdp { width: 76px; height: 88px; margin-top: -3px; margin-right: 37px; }
.trash { width: 76px; height: 96px; margin: -8px 0 0; }
.petal { mix-blend-mode: multiply; opacity: 0.88; }
.mar { font: 600 17px Inter, sans-serif; fill: #fff; }
.day { font: 300 50px Inter, sans-serif; fill: #222; letter-spacing: -2px; }
.tv { font: 600 35px Inter, sans-serif; fill: #fff; letter-spacing: -1px; }
.term { font: bold 21px "Liberation Mono", monospace; fill: #fff; }
.cursor { position: absolute; left: 1774px; top: 1603px; filter: drop-shadow(0 2px 2px #0005); }
</style>
